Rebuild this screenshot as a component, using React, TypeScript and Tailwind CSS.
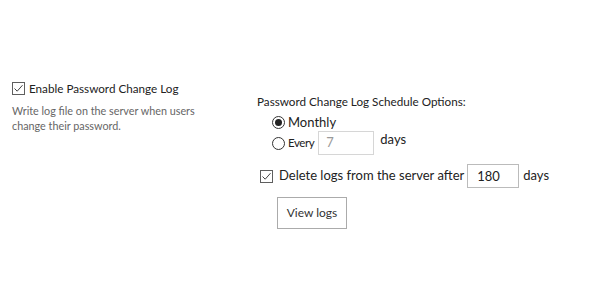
import React from "react";

function CheckBox() {
  return (
    <span className="flex h-[13px] w-[13px] shrink-0 items-center justify-center border border-[#5f5f5f] bg-white">
      <svg width="11" height="11" viewBox="0 0 11 11" fill="none">
        <path d="M1.5 5.5 L4.2 8.2 L9.5 2.2" stroke="#444" strokeWidth="1" />
      </svg>
    </span>
  );
}

function Radio({ checked }: { checked?: boolean }) {
  return (
    <span className="flex h-[13px] w-[13px] shrink-0 items-center justify-center rounded-full border border-[#333] bg-white">
      {checked && <span className="h-[7px] w-[7px] rounded-full bg-[#222]" />}
    </span>
  );
}

export default function App() {
  return (
    <div
      className="flex h-[289px] w-[592px] bg-white text-[13px] text-[#333]"
      style={{ fontFamily: '"Segoe UI", Lato, sans-serif' }}
    >
      <div className="w-[257px] shrink-0 pl-[12px] pt-[81px]">
        <label className="flex items-center gap-[4px] text-[11.7px] leading-[15px] text-[#222]">
          <CheckBox />
          <span>Enable Password Change Log</span>
        </label>
        <p className="mt-[7px] w-[190px] text-[10.8px] leading-[15px] text-[#666]">
          Write log file on the server when users change their password.
        </p>
      </div>

      <div className="pt-[93px]">
        <div className="text-[11.7px] leading-[16px] text-[#222]">
          Password Change Log Schedule Options:
        </div>
        <div className="ml-[15px] mt-[5px] flex flex-col">
          <label className="flex h-[17px] items-center gap-[3px] text-[#222]">
            <Radio checked />
            <span>Monthly</span>
          </label>
          <label className="flex items-center gap-[3px] text-[#222]">
            <Radio />
            <span className="mr-[1px] text-[11.5px] tracking-[-0.4px]">Every</span>
            <span className="flex h-[24px] w-[56px] items-center border border-[#d6d6d6] px-[7px] text-[#999]">
              7
            </span>
            <span className="ml-[3px] mt-[-6px]">days</span>
          </label>
        </div>
        <label className="ml-[3px] mt-[9px] flex items-center text-[#222]">
          <CheckBox />
          <span className="ml-[6px]">Delete logs from the server after</span>
          <span className="ml-[3px] flex h-[24px] w-[52px] items-center border border-[#bbb] px-[9px] pt-[2px]">
            180
          </span>
          <span className="ml-[4px]">days</span>
        </label>
        <button className="ml-[20px] mt-[9px] h-[32px] w-[70px] border border-[#ababab] bg-white text-[12px] text-[#333]">
          View logs
        </button>
      </div>
    </div>
  );
}
